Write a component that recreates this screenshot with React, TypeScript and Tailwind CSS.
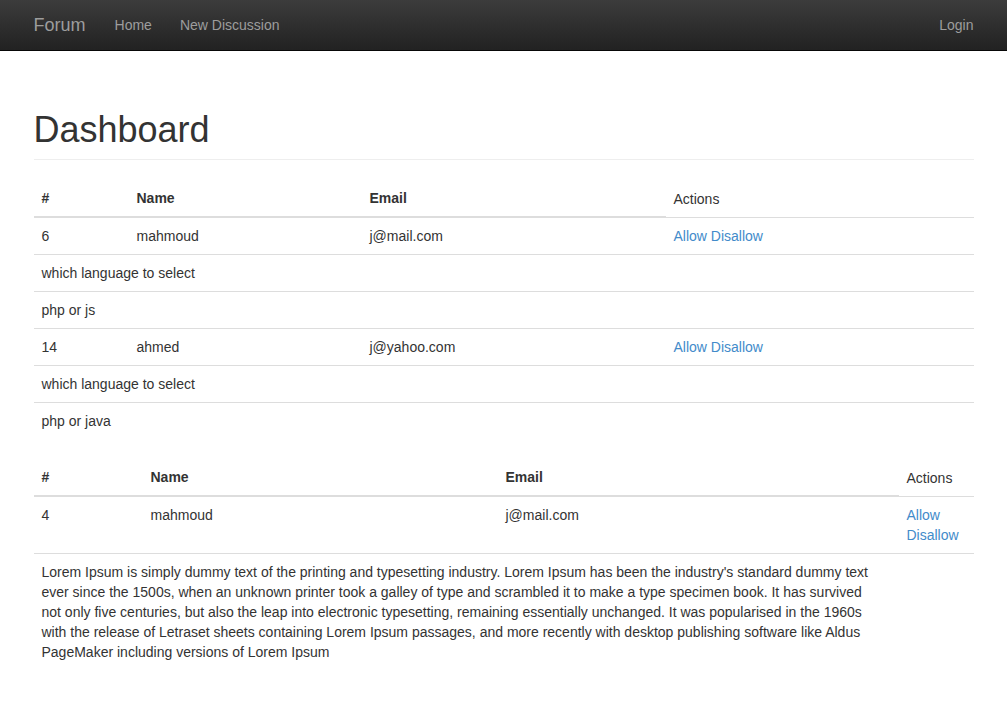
import React from "react";

const lorem =
  "Lorem Ipsum is simply dummy text of the printing and typesetting industry. Lorem Ipsum has been the industry's standard dummy text ever since the 1500s, when an unknown printer took a galley of type and scrambled it to make a type specimen book. It has survived not only five centuries, but also the leap into electronic typesetting, remaining essentially unchanged. It was popularised in the 1960s with the release of Letraset sheets containing Lorem Ipsum passages, and more recently with desktop publishing software like Aldus PageMaker including versions of Lorem Ipsum";

const th = "px-2 py-2 text-left font-bold align-bottom border-b-2 border-[#ddd]";
const td = "px-2 py-2 align-top border-t border-[#ddd]";

function Actions({ stacked }: { stacked?: boolean }) {
  return (
    <div className={stacked ? "flex flex-col" : ""}>
      <a href="#" className="text-[#428bca] hover:underline">Allow</a>
      {stacked ? null : " "}
      <a href="#" className="text-[#428bca] hover:underline">Disallow</a>
    </div>
  );
}

export default function App() {
  return (
    <div className="min-h-screen bg-white text-[14px] leading-[20px] text-[#333]" style={{ fontFamily: '"Liberation Sans", Arial, sans-serif' }}>
      {/* navbar */}
      <nav className="h-[51px] border-b border-[#080808] bg-gradient-to-b from-[#3c3c3c] to-[#222]">
        <div className="mx-auto flex h-[50px] w-[970px] items-center px-[15px]">
          <a href="#" className="pr-[15px] text-[18px] leading-[20px] text-[#9d9d9d]">Forum</a>
          <a href="#" className="px-[14px] text-[#9d9d9d]">Home</a>
          <a href="#" className="px-[14px] text-[#9d9d9d]">New Discussion</a>
          <a href="#" className="ml-auto text-[#9d9d9d]">Login</a>
        </div>
      </nav>

      <div className="mx-auto w-[970px] px-[15px]">
        <div className="mt-[59px] mb-[20px] border-b border-[#eee] pb-[9px]">
          <h1 className="text-[36px] leading-[40px] font-normal">Dashboard</h1>
        </div>

        <table className="mb-[20px] w-full table-fixed border-collapse">
          <colgroup>
            <col className="w-[95px]" />
            <col className="w-[233px]" />
            <col className="w-[304px]" />
            <col className="w-[308px]" />
          </colgroup>
          <thead>
            <tr>
              <th className={th}>#</th>
              <th className={th}>Name</th>
              <th className={th}>Email</th>
              <td className="px-2 py-2 align-bottom">Actions</td>
            </tr>
          </thead>
          <tbody>
            <tr>
              <td className={td}>6</td>
              <td className={td}>mahmoud</td>
              <td className={td}>j@mail.com</td>
              <td className={td}><Actions /></td>
            </tr>
            <tr><td className={td} colSpan={4}>which language to select</td></tr>
            <tr><td className={td} colSpan={4}>php or js</td></tr>
            <tr>
              <td className={td}>14</td>
              <td className={td}>ahmed</td>
              <td className={td}>j@yahoo.com</td>
              <td className={td}><Actions /></td>
            </tr>
            <tr><td className={td} colSpan={4}>which language to select</td></tr>
            <tr><td className={td} colSpan={4}>php or java</td></tr>
          </tbody>
        </table>

        <table className="mb-[20px] w-full table-fixed border-collapse">
          <colgroup>
            <col className="w-[109px]" />
            <col className="w-[355px]" />
            <col className="w-[401px]" />
            <col className="w-[75px]" />
          </colgroup>
          <thead>
            <tr>
              <th className={th}>#</th>
              <th className={th}>Name</th>
              <th className={th}>Email</th>
              <td className="px-2 py-2 align-bottom">Actions</td>
            </tr>
          </thead>
          <tbody>
            <tr>
              <td className={td}>4</td>
              <td className={td}>mahmoud</td>
              <td className={td}>j@mail.com</td>
              <td className={td}><Actions stacked /></td>
            </tr>
            <tr>
              <td className="py-2 pl-2 pr-[24px] align-top border-t border-[#ddd]" colSpan={3}>{lorem}</td>
              <td className={td}></td>
            </tr>
          </tbody>
        </table>
      </div>
    </div>
  );
}
